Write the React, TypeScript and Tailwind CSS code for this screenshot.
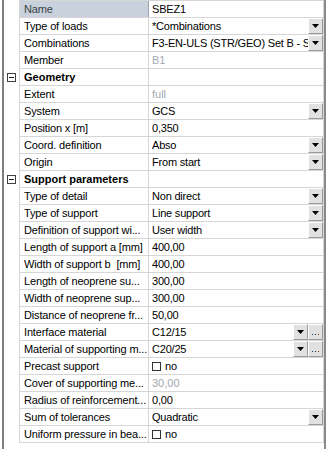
import React from "react";

type Row =
  | { kind: "cat"; label: string }
  | {
      kind: "prop";
      label: string;
      value: string;
      gray?: boolean;
      dd?: boolean;
      dots?: boolean;
      check?: boolean;
      selected?: boolean;
    };

const rows: Row[] = [
  { kind: "prop", label: "Name", value: "SBEZ1", selected: true },
  { kind: "prop", label: "Type of loads", value: "*Combinations", dd: true },
  { kind: "prop", label: "Combinations", value: "F3-EN-ULS (STR/GEO) Set B - S", dd: true },
  { kind: "prop", label: "Member", value: "B1", gray: true },
  { kind: "cat", label: "Geometry" },
  { kind: "prop", label: "Extent", value: "full", gray: true },
  { kind: "prop", label: "System", value: "GCS", dd: true },
  { kind: "prop", label: "Position x [m]", value: "0,350" },
  { kind: "prop", label: "Coord. definition", value: "Abso", dd: true },
  { kind: "prop", label: "Origin", value: "From start", dd: true },
  { kind: "cat", label: "Support parameters" },
  { kind: "prop", label: "Type of detail", value: "Non direct", dd: true },
  { kind: "prop", label: "Type of support", value: "Line support", dd: true },
  { kind: "prop", label: "Definition of support wi...", value: "User width", dd: true },
  { kind: "prop", label: "Length of support a [mm]", value: "400,00" },
  { kind: "prop", label: "Width of support b\u00a0 [mm]", value: "400,00" },
  { kind: "prop", label: "Length of neoprene su...", value: "300,00" },
  { kind: "prop", label: "Width of neoprene sup...", value: "300,00" },
  { kind: "prop", label: "Distance of neoprene fr...", value: "50,00" },
  { kind: "prop", label: "Interface material", value: "C12/15", dd: true, dots: true },
  { kind: "prop", label: "Material of supporting m...", value: "C20/25", dd: true, dots: true },
  { kind: "prop", label: "Precast support", value: "no", check: true },
  { kind: "prop", label: "Cover of supporting me...", value: "30,00", gray: true },
  { kind: "prop", label: "Radius of reinforcement...", value: "0,00" },
  { kind: "prop", label: "Sum of tolerances", value: "Quadratic", dd: true },
  { kind: "prop", label: "Uniform pressure in bea...", value: "no", check: true },
];

function DropButton() {
  return (
    <div className="w-[15px] h-[16px] shrink-0 flex items-center justify-center bg-[#e1e1e1] border-t border-l border-t-white border-l-white border-b border-r border-b-[#9a9a9a] border-r-[#9a9a9a]">
      <svg width="7" height="4" viewBox="0 0 7 4">
        <polygon points="0,0 7,0 3.5,4" fill="#000" />
      </svg>
    </div>
  );
}

function DotsButton() {
  return (
    <div className="w-[15px] h-[16px] shrink-0 flex items-end justify-center pb-[3px] bg-[#e1e1e1] border-t border-l border-t-white border-l-white border-b border-r border-b-[#9a9a9a] border-r-[#9a9a9a]">
      <svg width="7" height="2" viewBox="0 0 7 2">
        <rect x="0" y="0" width="1" height="1" fill="#2a2a8a" />
        <rect x="3" y="0" width="1" height="1" fill="#2a2a2a" />
        <rect x="6" y="0" width="1" height="1" fill="#8a2a2a" />
      </svg>
    </div>
  );
}

function MinusBox() {
  return (
    <div className="w-[9px] h-[9px] border border-[#404040] bg-white flex items-center justify-center">
      <div className="w-[5px] h-px bg-[#202020]" />
    </div>
  );
}

export default function App() {
  return (
    <div
      className="w-[330px] h-[449px] bg-white flex text-[11px] text-black overflow-hidden"
      style={{ fontFamily: '"Liberation Sans", Arial, sans-serif' }}
    >
      <div className="w-[2px]" />
      <div className="w-[2px] bg-[#7e7e7e]" />
      {/* gutter */}
      <div className="w-[15px] flex flex-col pt-px">
        {rows.map((r, i) => (
          <div key={i} className="h-[17px] flex items-center pl-[3px]">
            {r.kind === "cat" ? <MinusBox /> : null}
          </div>
        ))}
      </div>
      {/* grid */}
      <div className="w-[305px] self-start border-t border-l border-r border-[#d6d6d6] flex flex-col">
        {rows.map((r, i) =>
          r.kind === "cat" ? (
            <div key={i} className="h-[17px] flex border-b border-[#d6d6d6]">
              <div className="w-[129px] shrink-0 border-r border-[#d6d6d6] pl-[4px] leading-[16px] font-bold whitespace-nowrap">
                {r.label}
              </div>
              <div className="flex-1" />
            </div>
          ) : (
            <div key={i} className="h-[17px] flex border-b border-[#d6d6d6]">
              <div
                className={
                  r.selected
                    ? "w-[129px] shrink-0 border-r border-[#9aa4ae] bg-[#c9d2dc] text-[#3a3f45] pl-[4px] leading-[16px] whitespace-nowrap overflow-hidden tracking-[-0.15px]"
                    : "w-[129px] shrink-0 border-r border-[#d6d6d6] pl-[4px] leading-[16px] whitespace-nowrap overflow-hidden tracking-[-0.15px]"
                }
              >
                {r.label}
              </div>
              <div className="flex-1 min-w-0 flex">
                <div
                  className={
                    r.gray
                      ? "flex-1 min-w-0 pl-[3px] leading-[16px] whitespace-nowrap overflow-hidden text-[#a2a8b0]"
                      : "flex-1 min-w-0 pl-[3px] leading-[16px] whitespace-nowrap overflow-hidden tracking-[-0.2px]"
                  }
                >
                  {r.check ? (
                    <span className="flex items-center h-[16px]">
                      <span className="w-[9px] h-[9px] border border-[#333] bg-white inline-block" />
                      <span className="ml-[4px]">{r.value}</span>
                    </span>
                  ) : (
                    r.value
                  )}
                </div>
                {r.dd ? <DropButton /> : null}
                {r.dots ? <DotsButton /> : null}
              </div>
            </div>
          )
        )}
      </div>
      <div className="w-[2px] bg-[#8a8a8a]" />
      <div className="w-[4px]" />
    </div>
  );
}
